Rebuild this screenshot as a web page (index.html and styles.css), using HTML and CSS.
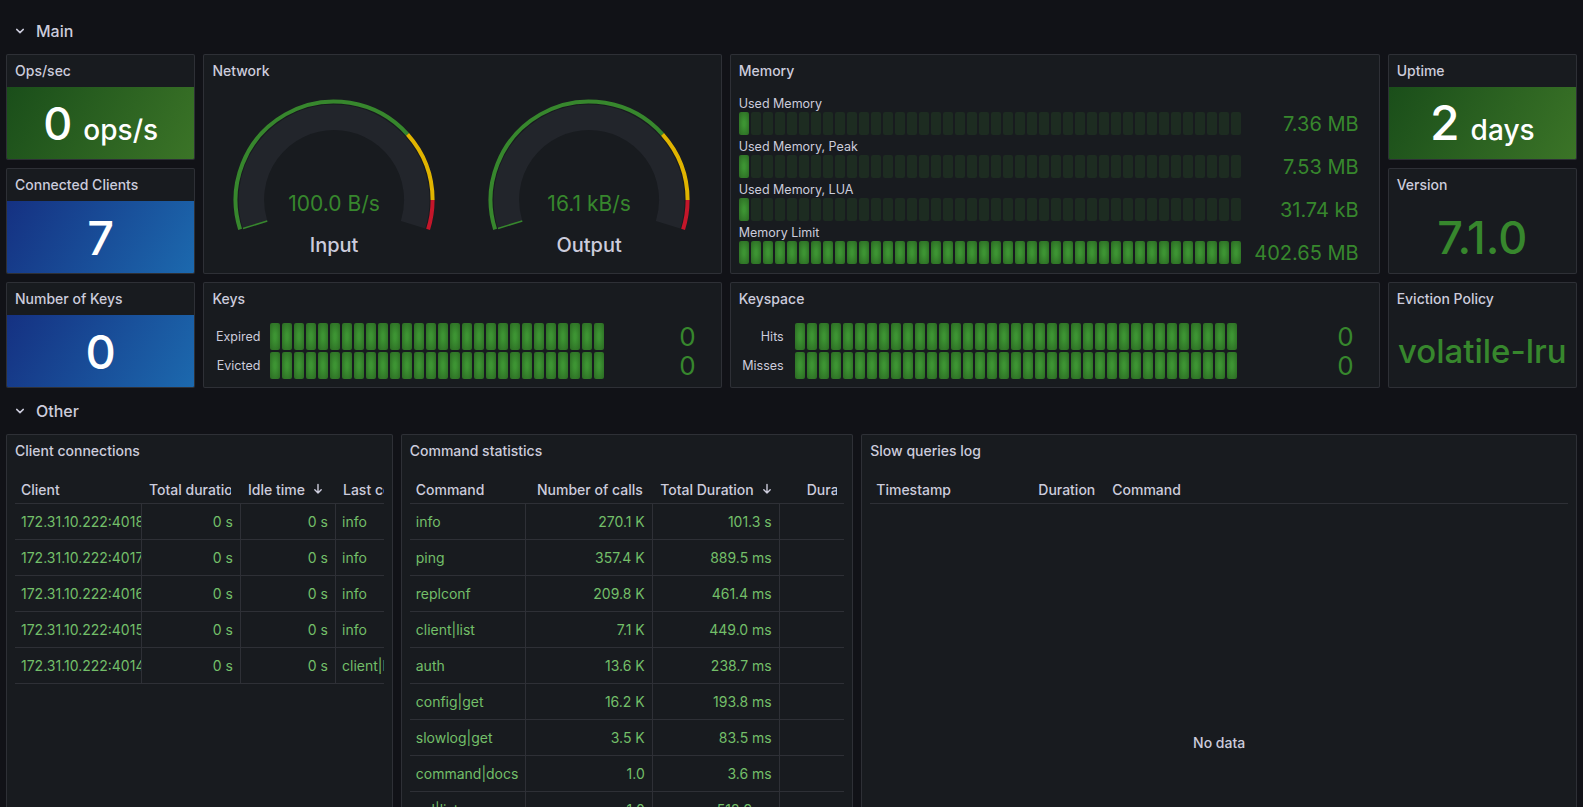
FILE: index.html
```html
<!DOCTYPE html>
<html>
<head>
<meta charset="utf-8">
<title>Redis Dashboard</title>
<link rel="stylesheet" href="styles.css">
</head>
<body>
<div class="dash">

  <div class="rowhead r-main">
    <svg class="chev" viewBox="0 0 16 16"><path d="M4.7 6.4 L8 9.6 L11.3 6.4" /></svg>
    <span>Main</span>
  </div>

  <section class="panel p-ops">
    <div class="ptitle">Ops/sec</div>
    <div class="stat green"><div class="sv"><span class="v v45">0</span><span class="u">ops/s</span></div></div>
  </section>

  <section class="panel p-clients">
    <div class="ptitle">Connected Clients</div>
    <div class="stat blue"><div class="sv"><span class="v v47">7</span></div></div>
  </section>

  <section class="panel p-net">
    <div class="ptitle">Network</div>
    <div class="gauges">
      <div class="gauge">
        <svg viewBox="0 0 254 186">
          <path class="track" d="M48.04 137.74 A82.75 82.75 0 1 1 205.96 137.74"/>
          <path class="band g" d="M33.01 142.45 A98.5 98.5 0 0 1 200.43 47.35"/>
          <path class="band y" d="M200.43 47.35 A98.5 98.5 0 0 1 225.5 113"/>
          <path class="band r" d="M225.5 113 A98.5 98.5 0 0 1 220.99 142.45"/>
          <line class="fill" x1="60.21" y1="133.93" x2="35.87" y2="141.55"/>
          <text class="gv" x="127" y="124">100.0 B/s</text>
          <text class="gl" x="127" y="165">Input</text>
        </svg>
      </div>
      <div class="gauge">
        <svg viewBox="0 0 254 186">
          <path class="track" d="M48.04 137.74 A82.75 82.75 0 1 1 205.96 137.74"/>
          <path class="band g" d="M33.01 142.45 A98.5 98.5 0 0 1 200.43 47.35"/>
          <path class="band y" d="M200.43 47.35 A98.5 98.5 0 0 1 225.5 113"/>
          <path class="band r" d="M225.5 113 A98.5 98.5 0 0 1 220.99 142.45"/>
          <line class="fill" x1="60.21" y1="133.93" x2="35.87" y2="141.55"/>
          <text class="gv" x="127" y="124">16.1 kB/s</text>
          <text class="gl" x="127" y="165">Output</text>
        </svg>
      </div>
    </div>
  </section>

  <section class="panel p-mem">
    <div class="ptitle">Memory</div>
    <div class="pbody mem">
      <div class="mrow">
        <div class="mlbl">Used Memory</div>
        <div class="mbar">
          <div class="lcd"><i class="on"></i>
            <i></i><i></i><i></i><i></i><i></i><i></i><i></i><i></i><i></i><i></i>
            <i></i><i></i><i></i><i></i><i></i><i></i><i></i><i></i><i></i><i></i>
            <i></i><i></i><i></i><i></i><i></i><i></i><i></i><i></i><i></i><i></i>
            <i></i><i></i><i></i><i></i><i></i><i></i><i></i><i></i><i></i><i></i>
            <i></i></div>
          <div class="mval">7.36 MB</div>
        </div>
      </div>
      <div class="mrow">
        <div class="mlbl">Used Memory, Peak</div>
        <div class="mbar">
          <div class="lcd"><i class="on"></i>
            <i></i><i></i><i></i><i></i><i></i><i></i><i></i><i></i><i></i><i></i>
            <i></i><i></i><i></i><i></i><i></i><i></i><i></i><i></i><i></i><i></i>
            <i></i><i></i><i></i><i></i><i></i><i></i><i></i><i></i><i></i><i></i>
            <i></i><i></i><i></i><i></i><i></i><i></i><i></i><i></i><i></i><i></i>
            <i></i></div>
          <div class="mval">7.53 MB</div>
        </div>
      </div>
      <div class="mrow">
        <div class="mlbl">Used Memory, LUA</div>
        <div class="mbar">
          <div class="lcd"><i class="on"></i>
            <i></i><i></i><i></i><i></i><i></i><i></i><i></i><i></i><i></i><i></i>
            <i></i><i></i><i></i><i></i><i></i><i></i><i></i><i></i><i></i><i></i>
            <i></i><i></i><i></i><i></i><i></i><i></i><i></i><i></i><i></i><i></i>
            <i></i><i></i><i></i><i></i><i></i><i></i><i></i><i></i><i></i><i></i>
            <i></i></div>
          <div class="mval">31.74 kB</div>
        </div>
      </div>
      <div class="mrow">
        <div class="mlbl">Memory Limit</div>
        <div class="mbar">
          <div class="lcd full">
            <i></i><i></i><i></i><i></i><i></i><i></i><i></i><i></i><i></i><i></i>
            <i></i><i></i><i></i><i></i><i></i><i></i><i></i><i></i><i></i><i></i>
            <i></i><i></i><i></i><i></i><i></i><i></i><i></i><i></i><i></i><i></i>
            <i></i><i></i><i></i><i></i><i></i><i></i><i></i><i></i><i></i><i></i>
            <i></i><i></i></div>
          <div class="mval">402.65 MB</div>
        </div>
      </div>
    </div>
  </section>

  <section class="panel p-up">
    <div class="ptitle">Uptime</div>
    <div class="stat green"><div class="sv"><span class="v v48">2</span><span class="u">days</span></div></div>
  </section>

  <section class="panel p-ver">
    <div class="ptitle">Version</div>
    <div class="stat plain"><div class="sv"><span class="v v45">7.1.0</span></div></div>
  </section>

  <section class="panel p-nkeys">
    <div class="ptitle">Number of Keys</div>
    <div class="stat blue"><div class="sv"><span class="v v47">0</span></div></div>
  </section>

  <section class="panel p-keys">
    <div class="ptitle">Keys</div>
    <div class="pbody kbody">
      <div class="krow">
        <div class="klbl">Expired</div>
        <div class="lcd full">
          <i></i><i></i><i></i><i></i><i></i><i></i><i></i><i></i><i></i><i></i>
          <i></i><i></i><i></i><i></i><i></i><i></i><i></i><i></i><i></i><i></i>
          <i></i><i></i><i></i><i></i><i></i><i></i><i></i><i></i></div>
        <div class="kval">0</div>
      </div>
      <div class="krow">
        <div class="klbl">Evicted</div>
        <div class="lcd full">
          <i></i><i></i><i></i><i></i><i></i><i></i><i></i><i></i><i></i><i></i>
          <i></i><i></i><i></i><i></i><i></i><i></i><i></i><i></i><i></i><i></i>
          <i></i><i></i><i></i><i></i><i></i><i></i><i></i><i></i></div>
        <div class="kval">0</div>
      </div>
    </div>
  </section>

  <section class="panel p-kspace">
    <div class="ptitle">Keyspace</div>
    <div class="pbody kbody">
      <div class="krow">
        <div class="klbl ks">Hits</div>
        <div class="lcd full">
          <i></i><i></i><i></i><i></i><i></i><i></i><i></i><i></i><i></i><i></i>
          <i></i><i></i><i></i><i></i><i></i><i></i><i></i><i></i><i></i><i></i>
          <i></i><i></i><i></i><i></i><i></i><i></i><i></i><i></i><i></i><i></i>
          <i></i><i></i><i></i><i></i><i></i><i></i><i></i></div>
        <div class="kval">0</div>
      </div>
      <div class="krow">
        <div class="klbl ks">Misses</div>
        <div class="lcd full">
          <i></i><i></i><i></i><i></i><i></i><i></i><i></i><i></i><i></i><i></i>
          <i></i><i></i><i></i><i></i><i></i><i></i><i></i><i></i><i></i><i></i>
          <i></i><i></i><i></i><i></i><i></i><i></i><i></i><i></i><i></i><i></i>
          <i></i><i></i><i></i><i></i><i></i><i></i><i></i></div>
        <div class="kval">0</div>
      </div>
    </div>
  </section>

  <section class="panel p-evict">
    <div class="ptitle">Eviction Policy</div>
    <div class="stat plain"><div class="sv"><span class="v v33">volatile-lru</span></div></div>
  </section>

  <div class="rowhead r-other">
    <svg class="chev" viewBox="0 0 16 16"><path d="M4.7 6.4 L8 9.6 L11.3 6.4" /></svg>
    <span>Other</span>
  </div>

  <section class="panel p-cc">
    <div class="ptitle">Client connections</div>
    <div class="pbody tbody">
      <div class="tbl">
        <div class="thead">
          <div class="c w126"><span>Client</span></div>
          <div class="c w99 hp"><span>Total duration</span></div>
          <div class="c w95 hp"><span>Idle time</span><svg class="sort" viewBox="0 0 12 12"><path d="M6 1.5v8.5M2.8 6.8 6 10 9.2 6.8"/></svg></div>
          <div class="c grow hp"><span>Last command</span></div>
        </div>
        <div class="trow"><div class="c w126">172.31.10.222:40188</div><div class="c w99 r">0 s</div><div class="c w95 r">0 s</div><div class="c grow">info</div></div>
        <div class="trow"><div class="c w126">172.31.10.222:40176</div><div class="c w99 r">0 s</div><div class="c w95 r">0 s</div><div class="c grow">info</div></div>
        <div class="trow"><div class="c w126">172.31.10.222:40164</div><div class="c w99 r">0 s</div><div class="c w95 r">0 s</div><div class="c grow">info</div></div>
        <div class="trow"><div class="c w126">172.31.10.222:40152</div><div class="c w99 r">0 s</div><div class="c w95 r">0 s</div><div class="c grow">info</div></div>
        <div class="trow"><div class="c w126">172.31.10.222:40140</div><div class="c w99 r">0 s</div><div class="c w95 r">0 s</div><div class="c grow">client|list</div></div>
      </div>
    </div>
  </section>

  <section class="panel p-cs">
    <div class="ptitle">Command statistics</div>
    <div class="pbody tbody">
      <div class="tbl">
        <div class="thead">
          <div class="c w115"><span>Command</span></div>
          <div class="c w127 hr"><span>Number of calls</span></div>
          <div class="c w127 hr hs"><span>Total Duration</span><svg class="sort" viewBox="0 0 12 12"><path d="M6 1.5v8.5M2.8 6.8 6 10 9.2 6.8"/></svg></div>
          <div class="c grow hd"><span>Duration per call</span></div>
        </div>
        <div class="trow"><div class="c w115">info</div><div class="c w127 r">270.1 K</div><div class="c w127 r">101.3 s</div><div class="c grow"></div></div>
        <div class="trow"><div class="c w115">ping</div><div class="c w127 r">357.4 K</div><div class="c w127 r">889.5 ms</div><div class="c grow"></div></div>
        <div class="trow"><div class="c w115">replconf</div><div class="c w127 r">209.8 K</div><div class="c w127 r">461.4 ms</div><div class="c grow"></div></div>
        <div class="trow"><div class="c w115">client|list</div><div class="c w127 r">7.1 K</div><div class="c w127 r">449.0 ms</div><div class="c grow"></div></div>
        <div class="trow"><div class="c w115">auth</div><div class="c w127 r">13.6 K</div><div class="c w127 r">238.7 ms</div><div class="c grow"></div></div>
        <div class="trow"><div class="c w115">config|get</div><div class="c w127 r">16.2 K</div><div class="c w127 r">193.8 ms</div><div class="c grow"></div></div>
        <div class="trow"><div class="c w115">slowlog|get</div><div class="c w127 r">3.5 K</div><div class="c w127 r">83.5 ms</div><div class="c grow"></div></div>
        <div class="trow"><div class="c w115">command|docs</div><div class="c w127 r">1.0</div><div class="c w127 r">3.6 ms</div><div class="c grow"></div></div>
        <div class="trow"><div class="c w115">acl|list</div><div class="c w127 r">1.0</div><div class="c w127 r">512.9 µs</div><div class="c grow"></div></div>
      </div>
    </div>
  </section>

  <section class="panel p-slow">
    <div class="ptitle">Slow queries log</div>
    <div class="pbody tbody slow">
      <div class="thead">
        <div class="c w161"><span>Timestamp</span></div>
        <div class="c w73 hr"><span>Duration</span></div>
        <div class="c grow hp"><span>Command</span></div>
      </div>
      <div class="nodata">No data</div>
    </div>
  </section>

</div>
</body>
</html>
```

FILE: styles.css
```css
* { box-sizing: border-box; }

html, body {
  margin: 0;
  height: 100%;
}

body {
  background: #111217;
  color: #ccccdc;
  font-family: Inter, "Noto Sans", "Liberation Sans", sans-serif;
  overflow: hidden;
}

.dash {
  display: grid;
  grid-template-columns: repeat(24, minmax(0, 1fr));
  grid-auto-rows: 30px;
  gap: 8px;
  padding: 16px 6px 0;
}

/* rows */
.rowhead {
  grid-column: 1 / -1;
  display: flex;
  align-items: center;
  gap: 8px;
  padding-left: 6px;
  font-size: 16px;
  font-weight: 500;
  color: #ccccdc;
}
.chev { width: 16px; height: 16px; flex: none; }
.chev path {
  fill: none;
  stroke: #ccccdc;
  stroke-width: 1.5;
  stroke-linecap: round;
  stroke-linejoin: round;
}

.r-main { grid-row: 1; }
.r-other { grid-row: 11; }

.p-ops     { grid-column: 1 / span 3;  grid-row: 2 / span 3; }
.p-clients { grid-column: 1 / span 3;  grid-row: 5 / span 3; }
.p-net     { grid-column: 4 / span 8;  grid-row: 2 / span 6; }
.p-mem     { grid-column: 12 / span 10; grid-row: 2 / span 6; }
.p-up      { grid-column: 22 / span 3; grid-row: 2 / span 3; }
.p-ver     { grid-column: 22 / span 3; grid-row: 5 / span 3; }
.p-nkeys   { grid-column: 1 / span 3;  grid-row: 8 / span 3; }
.p-keys    { grid-column: 4 / span 8;  grid-row: 8 / span 3; }
.p-kspace  { grid-column: 12 / span 10; grid-row: 8 / span 3; }
.p-evict   { grid-column: 22 / span 3; grid-row: 8 / span 3; }
.p-cc      { grid-column: 1 / span 6;  grid-row: 12 / span 15; }
.p-cs      { grid-column: 7 / span 7;  grid-row: 12 / span 15; }
.p-slow    { grid-column: 14 / span 11; grid-row: 12 / span 15; }

/* panels */
.panel {
  background: #181b1f;
  border: 1px solid rgba(204, 204, 220, 0.12);
  border-radius: 2px;
  display: flex;
  flex-direction: column;
  overflow: hidden;
  min-width: 0;
}
.ptitle {
  flex: none;
  height: 32px;
  line-height: 32px;
  padding: 0 8px;
  font-size: 14px;
  font-weight: 500;
  color: #ccccdc;
  white-space: nowrap;
}
.pbody {
  flex: 1;
  min-height: 0;
  padding: 8px;
}

/* stat */
.stat {
  flex: 1;
  min-height: 0;
  display: flex;
  align-items: center;
  justify-content: center;
  white-space: nowrap;
}
.stat.green { background: linear-gradient(120deg, rgb(26, 78, 26), rgb(59, 116, 39)); color: #fff; }
.stat.blue  { background: linear-gradient(120deg, rgb(21, 49, 130), rgb(28, 105, 174)); color: #fff; }
.stat.plain { color: #37872d; }
.sv { line-height: 1; font-weight: 500; }
.sv .v { line-height: 1; }
.v45 { font-size: 45px; }
.v47 { font-size: 47px; }
.v48 { font-size: 48px; }
.v33 { font-size: 33px; }
.sv .u { font-size: 28px; line-height: 1; margin-left: 11px; }

/* gauges */
.gauges {
  flex: 1;
  display: flex;
  padding: 0 5px 0 3px;
}
.gauge { flex: 1; min-width: 0; }
.gauge svg { display: block; width: 100%; height: 186px; }
.track { fill: none; stroke: #22252b; stroke-width: 25.5; }
.band { fill: none; stroke-width: 4; }
.band.g { stroke: #37872d; }
.band.y { stroke: #e0b400; }
.band.r { stroke: #c4162a; }
.fill { stroke: #37872d; stroke-width: 1.5; }
.gv { font-size: 21px; fill: #37872d; text-anchor: middle; font-weight: 400; }
.gl { font-size: 20px; fill: #ccccdc; text-anchor: middle; font-weight: 500; }

/* lcd bar gauge */
.lcd {
  display: flex;
  gap: 2px;
  flex: none;
  height: 100%;
}
.lcd i {
  display: block;
  width: 10px;
  height: 100%;
  border-radius: 2px;
  background: rgba(55, 135, 45, 0.16);
}
.lcd i.on,
.lcd.full i {
  background: radial-gradient(ellipse at center, #3d9433 15%, #2a6822 100%);
}

.mem {
  display: flex;
  flex-direction: column;
  gap: 3px;
}
.mlbl {
  height: 17px;
  line-height: 17px;
  font-size: 12.5px;
  color: #ccccdc;
  white-space: nowrap;
}
.mbar {
  height: 23px;
  display: flex;
  align-items: center;
}
.mval {
  flex: 1;
  text-align: right;
  padding-right: 12px;
  font-size: 20px;
  color: #37872d;
  white-space: nowrap;
}

.kbody {
  display: flex;
  flex-direction: column;
  gap: 2px;
}
.krow {
  flex: 1;
  display: flex;
  align-items: center;
  min-height: 0;
}
.klbl {
  flex: none;
  width: 48px;
  margin-right: 10px;
  text-align: right;
  font-size: 12.5px;
  color: #ccccdc;
}
.klbl.ks { width: 45px; margin-right: 11px; }
.kval {
  flex: 1;
  text-align: right;
  padding-right: 17px;
  font-size: 26px;
  color: #37872d;
}

/* tables */
.tbody { overflow: hidden; }
.tbl { font-size: 14px; overflow: hidden; }
.thead, .trow { display: flex; }
.thead {
  height: 29px;
  border-bottom: 1px solid rgba(204, 204, 220, 0.12);
  font-size: 14px;
  font-weight: 500;
  color: #ccccdc;
}
.trow {
  height: 36px;
  border-bottom: 1px solid rgba(204, 204, 220, 0.12);
  color: #73bf69;
}
.c {
  flex: none;
  display: flex;
  align-items: center;
  overflow: hidden;
  white-space: nowrap;
  padding: 0 7px 0 6px;
}
.c span { overflow: hidden; white-space: nowrap; min-width: 0; }
.trow .c + .c { border-left: 1px solid rgba(204, 204, 220, 0.12); }
.thead .c.hp { padding-left: 8px; padding-right: 9px; }
.thead .c.hr { justify-content: flex-end; padding-right: 9px; }
.thead .c.hs { padding-right: 6px; }
.thead .c.hd { padding-left: 28px; }
.c.r { justify-content: flex-end; }
.c.grow { flex: 1; min-width: 60px; }
.w126 { width: 126px; }
.w99 { width: 99px; }
.w95 { width: 95px; }
.w115 { width: 115px; }
.w127 { width: 127px; }
.w161 { width: 161px; }
.w73 { width: 73px; }

.sort { width: 12px; height: 12px; flex: none; margin-left: 7px; }
.sort path {
  fill: none;
  stroke: #ccccdc;
  stroke-width: 1.4;
  stroke-linecap: round;
  stroke-linejoin: round;
}

.slow { display: flex; flex-direction: column; }
.nodata {
  flex: 1;
  display: flex;
  align-items: center;
  justify-content: center;
  padding-bottom: 7px;
  font-size: 14px;
  font-weight: 500;
  color: #ccccdc;
}
```
